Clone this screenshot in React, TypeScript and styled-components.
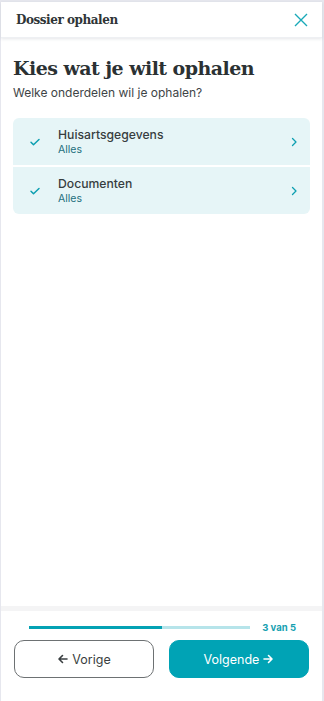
import React from "react";
import styled, { createGlobalStyle } from "styled-components";

const GlobalStyle = createGlobalStyle`
  html, body, #root {
    margin: 0;
    height: 100%;
  }
  body {
    background: #e6e7ee;
    font-family: Inter, "Noto Sans", sans-serif;
    padding-top: 2px;
  }
  * {
    box-sizing: border-box;
  }
`;

const Styles = {
  Page: styled.div`
    height: 100%;
    margin: 0 2px 0 1px;
    background: #ffffff;
    display: flex;
    flex-direction: column;
  `,

  Header: styled.header`
    height: 36px;
    flex-shrink: 0;
    display: flex;
    align-items: center;
    justify-content: space-between;
    padding: 0 14px 0 15px;
    box-shadow: 0 1px 3px rgba(40, 50, 70, 0.12);
    border-bottom: 1px solid #eef0f3;

    h1 {
      margin: 0;
      font-family: "DejaVu Serif", "Liberation Serif", serif;
      font-size: 12px;
      font-weight: 700;
      letter-spacing: -0.45px;
      color: #2f3537;
    }
  `,

  CloseButton: styled.button`
    border: none;
    background: none;
    padding: 0;
    display: flex;
    color: #19a9b8;
    cursor: pointer;
  `,

  Main: styled.main`
    flex: 1;
    padding: 19px 12px 0 12px;

    h2 {
      margin: 0;
      font-family: "DejaVu Serif", "Liberation Serif", serif;
      font-size: 19px;
      font-weight: 700;
      color: #2b3133;
      letter-spacing: -0.55px;
    }

    .intro {
      margin: 6px 0 0;
      font-size: 12px;
      color: #3e4446;
    }
  `,

  List: styled.div`
    margin-top: 18px;
    border-radius: 6px;
    overflow: hidden;
    display: flex;
    flex-direction: column;
    gap: 2px;
  `,

  Item: styled.div`
    height: 47px;
    background: #e6f5f7;
    display: flex;
    align-items: center;
    padding: 0 10px 0 16px;
    cursor: pointer;

    .text {
      flex: 1;
      margin-left: 17px;
      display: flex;
      flex-direction: column;
    }
    .title {
      font-size: 12.2px;
      font-weight: 500;
      color: #373d3f;
      line-height: 16px;
    }
    .sub {
      font-size: 10.5px;
      color: #1d6f7d;
      line-height: 14px;
    }
    svg {
      color: #0d9fb1;
      flex-shrink: 0;
    }
  `,

  Footer: styled.footer`
    flex-shrink: 0;
    border-top: 5px solid #f4f4f5;
    padding: 11px 13px 23px 13px;
  `,

  Progress: styled.div`
    display: flex;
    align-items: center;
    padding: 0 13px 0 15px;
    gap: 12px;

    .label {
      font-size: 9.5px;
      font-weight: 700;
      color: #16a0b1;
    }
  `,

  Track: styled.div`
    flex: 1;
    height: 3px;
    background: #b6e4ea;
  `,

  Fill: styled.div`
    height: 100%;
    background: #04a2b4;
  `,

  Buttons: styled.div`
    margin-top: 7px;
    display: grid;
    grid-template-columns: 1fr 1fr;
    gap: 15px;
  `,

  Button: styled.button<{ primary?: boolean }>`
    height: 38px;
    border-radius: 10px;
    border: 1px solid ${(p) => (p.primary ? "#00a3b5" : "#6d7173")};
    background: ${(p) => (p.primary ? "#00a3b5" : "#ffffff")};
    color: ${(p) => (p.primary ? "#ffffff" : "#3a3f41")};
    font-family: Inter, "Noto Sans", sans-serif;
    font-size: 12.5px;
    display: flex;
    align-items: center;
    justify-content: center;
    gap: 3px;
    cursor: pointer;
  `,
};

const Check = () => (
  <svg width="12" height="12" viewBox="0 0 24 24" fill="none" stroke="currentColor" strokeWidth="3" strokeLinecap="round" strokeLinejoin="round">
    <path d="M4 12.5l5 5L20 7" />
  </svg>
);

const Chevron = () => (
  <svg width="12" height="12" viewBox="0 0 24 24" fill="none" stroke="currentColor" strokeWidth="2.6" strokeLinecap="round" strokeLinejoin="round">
    <path d="M9 5l7 7-7 7" />
  </svg>
);

const Arrow = ({ left }: { left?: boolean }) => (
  <svg width="12" height="12" viewBox="0 0 24 24" fill="none" stroke="currentColor" strokeWidth="3.2" strokeLinecap="round" strokeLinejoin="round">
    {left ? <path d="M20 12H5M11 5l-7 7 7 7" /> : <path d="M4 12h15M13 5l7 7-7 7" />}
  </svg>
);

const parts = [
  { key: "huisarts", title: "Huisartsgegevens", sub: "Alles" },
  { key: "docs", title: "Documenten", sub: "Alles" },
];

export default function App() {
  const step = 3;
  const total = 5;

  return (
    <>
      <GlobalStyle />
      <Styles.Page>
        <Styles.Header>
          <h1>Dossier ophalen</h1>
          <Styles.CloseButton aria-label="Sluiten">
            <svg width="14" height="14" viewBox="0 0 14 14" fill="none" stroke="currentColor" strokeWidth="1.4">
              <path d="M1 1l12 12M13 1L1 13" />
            </svg>
          </Styles.CloseButton>
        </Styles.Header>

        <Styles.Main>
          <h2>Kies wat je wilt ophalen</h2>
          <p className="intro">Welke onderdelen wil je ophalen?</p>

          <Styles.List>
            {parts.map((part) => (
              <Styles.Item key={part.key}>
                <Check />
                <div className="text">
                  <span className="title">{part.title}</span>
                  <span className="sub">{part.sub}</span>
                </div>
                <Chevron />
              </Styles.Item>
            ))}
          </Styles.List>
        </Styles.Main>

        <Styles.Footer>
          <Styles.Progress>
            <Styles.Track>
              <Styles.Fill style={{ width: `${(step / total) * 100}%` }} />
            </Styles.Track>
            <span className="label">
              {step} van {total}
            </span>
          </Styles.Progress>
          <Styles.Buttons>
            <Styles.Button>
              <Arrow left /> Vorige
            </Styles.Button>
            <Styles.Button primary>
              Volgende <Arrow />
            </Styles.Button>
          </Styles.Buttons>
        </Styles.Footer>
      </Styles.Page>
    </>
  );
}
